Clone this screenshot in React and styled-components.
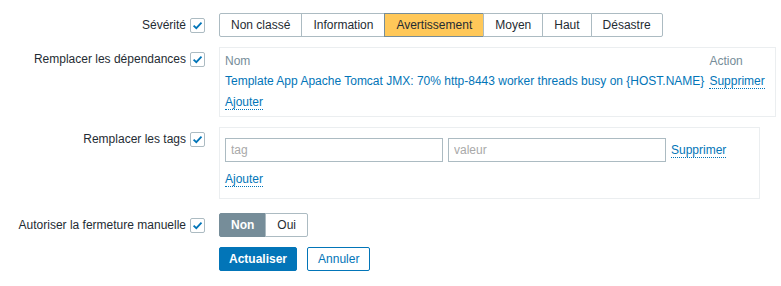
import React from "react";
import styled, { createGlobalStyle } from "styled-components";

const Global = createGlobalStyle`
  html, body { margin: 0; padding: 0; background: #ffffff; }
  body { font-family: "Liberation Sans", Arial, sans-serif; font-size: 12px; color: #1f2c33; }
  * { box-sizing: border-box; }
`;

const Form = styled.div`
  display: grid;
  grid-template-columns: 205px auto;
  column-gap: 14px;
  padding-top: 13px;
  justify-content: start;
`;

const LabelCell = styled.div`
  display: flex;
  justify-content: flex-end;
  align-items: center;
  gap: 4px;
  height: 24px;
  margin-top: ${(p) => p.$top || 0}px;
  white-space: nowrap;
`;

const ControlCell = styled.div`
  margin-top: ${(p) => p.$top || 0}px;
  display: flex;
  align-items: flex-start;
  gap: ${(p) => p.$gap || 0}px;
`;

const Box = styled.span`
  width: 15px;
  height: 15px;
  border: 1px solid #acbbc2;
  border-radius: 2px;
  background: #fff;
  display: inline-flex;
  align-items: center;
  justify-content: center;
  flex: none;
`;

const Check = () => (
  <Box>
    <svg width="11" height="11" viewBox="0 0 11 11">
      <path d="M1.6 5.6 L4.3 8.2 L9.5 2.7" fill="none" stroke="#0275b8" strokeWidth="1.8" />
    </svg>
  </Box>
);

const Segmented = styled.div`
  display: flex;
`;

const Segment = styled.span`
  height: 24px;
  line-height: 22px;
  padding: 0 11px;
  border: 1px solid ${(p) => (p.$on ? "#768d99" : "#acbbc2")};
  margin-left: -1px;
  background: ${(p) => (p.$on ? p.$color || "#768d99" : "#fff")};
  color: ${(p) => (p.$on && !p.$color ? "#fff" : "#1f2c33")};
  font-weight: ${(p) => (p.$on && !p.$color ? "bold" : "normal")};
  white-space: nowrap;
  &:first-child { margin-left: 0; border-radius: 2px 0 0 2px; }
  &:last-child { border-radius: 0 2px 2px 0; }
`;

const Panel = styled.div`
  border: 1px solid #ebeef0;
  padding: ${(p) => p.$pad};
  width: ${(p) => p.$width || "auto"};
`;

const Table = styled.table`
  border-collapse: collapse;
  border-spacing: 0;
  th, td { padding: 0 5px 0 0; text-align: left; white-space: nowrap; line-height: 20px; }
  th { font-weight: normal; color: #768d99; }
  tr.last td { padding-top: 1px; }
`;

const Link = styled.a`
  color: #0275b8;
  text-decoration: none;
  border-bottom: ${(p) => (p.$dotted ? "1px dotted #0275b8" : "none")};
  cursor: pointer;
`;

const TagRow = styled.div`
  display: flex;
  align-items: center;
  gap: 5px;
`;

const Input = styled.input`
  width: 218px;
  height: 24px;
  border: 1px solid #acbbc2;
  border-radius: 0;
  padding: 0 5px;
  font-family: inherit;
  font-size: 12px;
  color: #1f2c33;
  outline: none;
  &::placeholder { color: #a9a9a9; }
`;

const AddLine = styled.div`
  margin-top: 9px;
  line-height: 16px;
`;

const Button = styled.button`
  height: 24px;
  padding: 0 ${(p) => (p.$primary ? 9 : 10)}px;
  border: 1px solid #0275b8;
  border-radius: 2px;
  background: ${(p) => (p.$primary ? "#0275b8" : "#fff")};
  color: ${(p) => (p.$primary ? "#fff" : "#0275b8")};
  font-family: inherit;
  font-size: 12px;
  font-weight: ${(p) => (p.$primary ? "bold" : "normal")};
  cursor: pointer;
`;

const severities = [
  { name: "Non classé" },
  { name: "Information" },
  { name: "Avertissement", on: true, color: "#ffc859" },
  { name: "Moyen" },
  { name: "Haut" },
  { name: "Désastre" },
];

export default function App() {
  return (
    <>
      <Global />
      <Form>
        <LabelCell>Sévérité<Check /></LabelCell>
        <ControlCell>
          <Segmented>
            {severities.map((s) => (
              <Segment key={s.name} $on={s.on} $color={s.color}>{s.name}</Segment>
            ))}
          </Segmented>
        </ControlCell>

        <LabelCell $top={10}>Remplacer les dépendances<Check /></LabelCell>
        <ControlCell $top={10}>
          <Panel $pad="3px 5px 4px 5px">
            <Table>
              <thead>
                <tr><th>Nom</th><th>Action</th></tr>
              </thead>
              <tbody>
                <tr>
                  <td><Link>Template App Apache Tomcat JMX: 70% http-8443 worker threads busy on {"{HOST.NAME}"}</Link></td>
                  <td><Link $dotted>Supprimer</Link></td>
                </tr>
                <tr className="last">
                  <td colSpan={2}><Link $dotted>Ajouter</Link></td>
                </tr>
              </tbody>
            </Table>
          </Panel>
        </ControlCell>

        <LabelCell $top={10}>Remplacer les tags<Check /></LabelCell>
        <ControlCell $top={10}>
          <Panel $pad="10px 5px 11px 5px" $width="541px">
            <TagRow>
              <Input placeholder="tag" />
              <Input placeholder="valeur" />
              <Link $dotted>Supprimer</Link>
            </TagRow>
            <AddLine><Link $dotted>Ajouter</Link></AddLine>
          </Panel>
        </ControlCell>

        <LabelCell $top={14}>Autoriser la fermeture manuelle<Check /></LabelCell>
        <ControlCell $top={14}>
          <Segmented>
            <Segment $on>Non</Segment>
            <Segment>Oui</Segment>
          </Segmented>
        </ControlCell>

        <div />
        <ControlCell $top={10} $gap={10}>
          <Button $primary>Actualiser</Button>
          <Button>Annuler</Button>
        </ControlCell>
      </Form>
    </>
  );
}
